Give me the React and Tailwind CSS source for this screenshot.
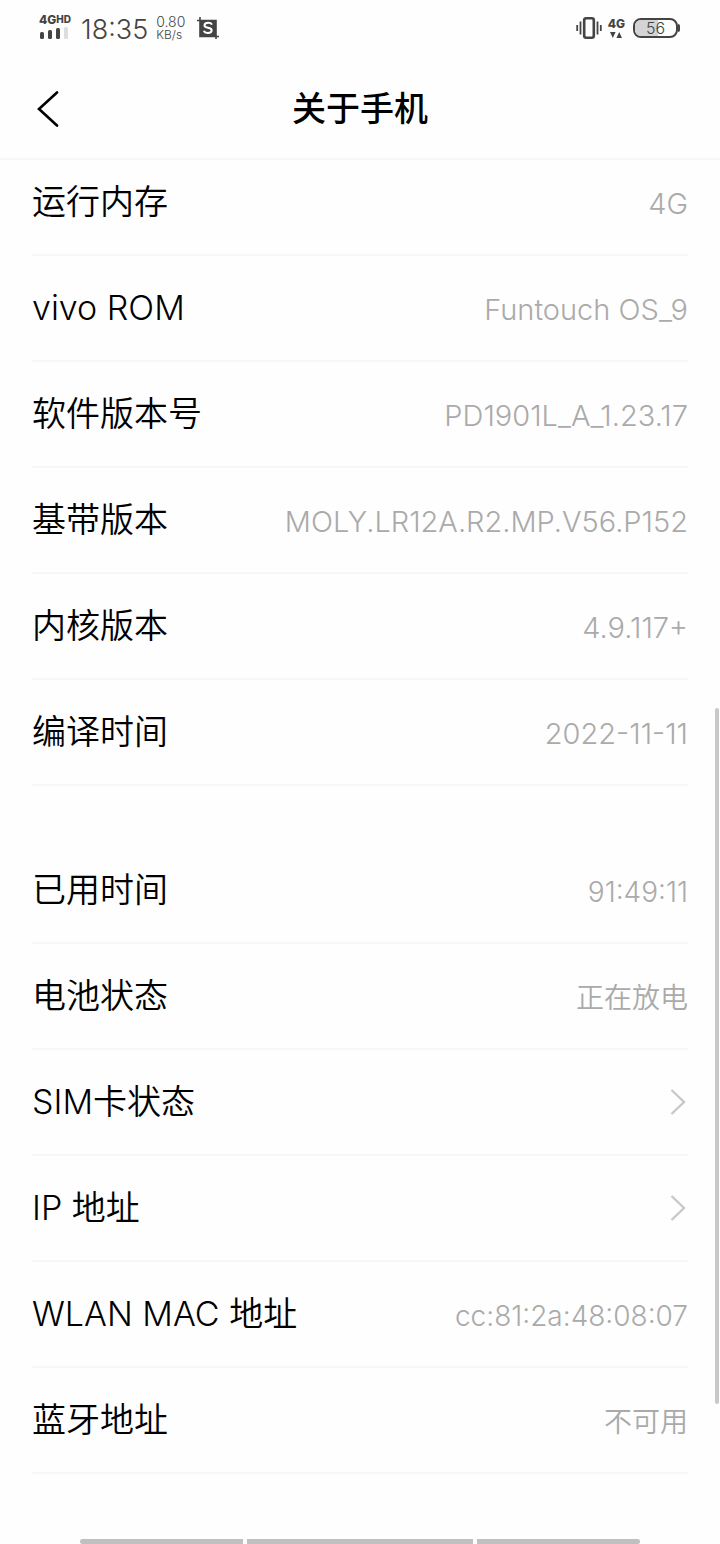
import React from 'react';

const deviceInfo = [
  { label: '运行内存', value: '4G' },
  { label: 'vivo ROM', value: 'Funtouch OS_9' },
  { label: '软件版本号', value: 'PD1901L_A_1.23.17' },
  { label: '基带版本', value: 'MOLY.LR12A.R2.MP.V56.P152' },
  { label: '内核版本', value: '4.9.117+' },
  { label: '编译时间', value: '2022-11-11' },
];

const statusInfo = [
  { label: '已用时间', value: '91:49:11' },
  { label: '电池状态', value: '正在放电' },
  { label: 'SIM卡状态', link: true },
  { label: 'IP 地址', link: true },
  { label: 'WLAN MAC 地址', value: 'cc:81:2a:48:08:07' },
  { label: '蓝牙地址', value: '不可用' },
];

const SignalBars = () => (
  <svg width="30" height="12" viewBox="0 0 30 12" fill="#444">
    <rect x="1" y="5" width="4" height="7" rx="1.5" />
    <rect x="9" y="3" width="4" height="9" rx="1.5" />
    <rect x="17" y="1" width="4" height="11" rx="1.5" />
    <rect x="25" y="0" width="4" height="12" rx="1.5" fill="#ddd" />
  </svg>
);

const ScreenshotIcon = () => (
  <svg width="22" height="22" viewBox="0 0 22 22">
    <path d="M0 3.5H19V22M3 0V19.5H22" fill="none" stroke="#444" strokeWidth="1.6" />
    <rect x="3" y="3" width="16" height="16" fill="#444" />
    <path
      d="M15 7.6C14.4 6.4 13 5.8 11.2 5.8C9 5.8 7.5 6.7 7.5 8.4C7.5 11.8 14.7 9.8 14.7 13.3C14.7 15 13.2 16 11 16C9 16 7.4 15.2 6.9 13.7"
      fill="none"
      stroke="#fff"
      strokeWidth="2"
    />
  </svg>
);

const VibrateIcon = () => (
  <svg width="26" height="24" viewBox="0 0 26 24" fill="none" stroke="#444">
    <rect x="8.2" y="2.2" width="9.6" height="19.6" rx="2" strokeWidth="2.6" />
    <path d="M4.5 5.5V18.5M21.5 5.5V18.5M1.2 9V15M24.8 9V15" strokeWidth="1.8" />
  </svg>
);

const DataArrows = () => (
  <svg width="12" height="6" viewBox="0 0 12 6" fill="#444">
    <path d="M0 0H5.6L2.8 6ZM6.4 6H12L9.2 0Z" />
  </svg>
);

const StatusBar = () => (
  <div className="h-14 pl-[39px] pr-10 flex items-center justify-between text-[#444]">
    <div className="flex items-center">
      <div className="pb-1 flex flex-col">
        <div className="flex items-start font-extrabold">
          <span className="text-[12px] leading-[14px]">4G</span>
          <span className="text-[10px] leading-3">HD</span>
        </div>
        <SignalBars />
      </div>
      <span className="ml-2.5 mt-1 text-[27px] leading-8">18:35</span>
      <div className="ml-2 flex flex-col">
        <span className="text-[14px] leading-[14px]">0.80</span>
        <span className="text-[12px] leading-3">KB/s</span>
      </div>
      <div className="ml-3">
        <ScreenshotIcon />
      </div>
    </div>
    <div className="flex items-center">
      <VibrateIcon />
      <div className="ml-1.5 flex flex-col items-center gap-0.5">
        <span className="text-[12px] leading-3 font-extrabold">4G</span>
        <DataArrows />
      </div>
      <div className="ml-2 flex items-center">
        <div className="relative w-[45px] h-5 rounded-[8px] border-2 border-[#444] overflow-hidden flex items-center justify-center">
          <div className="absolute inset-y-0 left-0 w-[56%] bg-[#d4d4d4]" />
          <span className="relative text-[16px] leading-4">56</span>
        </div>
        <div className="w-0.5 h-2 rounded-r bg-[#444]" />
      </div>
    </div>
  </div>
);

const Header = () => (
  <header className="h-[104px] px-8 pt-1 border-b-2 border-[#f7f7f7] grid grid-cols-[1fr_auto_1fr] items-center">
    <button type="button" aria-label="返回" className="w-8 h-12 flex items-center justify-center">
      <svg width="22" height="36" viewBox="0 0 22 36" fill="none" stroke="#000" strokeWidth="2.6">
        <path d="M20 1.5L2 18L20 34.5" strokeLinecap="round" />
      </svg>
    </button>
    <h1 className="text-[34px] leading-10 font-medium">关于手机</h1>
  </header>
);

const InfoRow = ({ label, value, link }) => {
  const title = <span className="text-[34px] leading-10">{label}</span>;

  return (
    <li className="border-b-2 border-[#f7f7f7]">
      {link ? (
        <button type="button" className="w-full h-[104px] flex items-center justify-between text-left">
          {title}
          <svg width="18" height="28" viewBox="0 0 18 28" fill="none" stroke="#c8c8c8" strokeWidth="2.4">
            <path d="M1.5 2L14 14L1.5 26" />
          </svg>
        </button>
      ) : (
        <div className="h-[104px] flex items-center justify-between">
          {title}
          <span className="mt-1 leading-10 text-[#aaa]">{value}</span>
        </div>
      )}
    </li>
  );
};

const InfoList = ({ items, className }) => (
  <ul className={className}>
    {items.map((item) => (
      <InfoRow key={item.label} {...item} />
    ))}
  </ul>
);

export default function App() {
  return (
    <div className="min-h-screen flex flex-col bg-[#fefefe] text-black font-[350] font-['Inter','Noto_Sans_CJK_SC',sans-serif]">
      <StatusBar />
      <Header />

      <main className="relative flex-1 overflow-hidden px-8">
        {/* List is scrolled slightly past its first row */}
        <div className="-mt-2.5 flex flex-col gap-[52px]">
          <InfoList items={deviceInfo} className="text-[29px]" />
          <InfoList items={statusInfo} className="text-[28px]" />
        </div>
        <div className="absolute right-px top-[548px] w-1 h-[696px] rounded-full bg-[#c8c8c8]" />
      </main>

      {/* Gesture bar */}
      <nav className="px-20 flex gap-1">
        <div className="flex-[163] h-[5px] rounded-l-full bg-[#c0c0c0]" />
        <div className="flex-[226] h-[5px] bg-[#c0c0c0]" />
        <div className="flex-[163] h-[5px] rounded-r-full bg-[#c0c0c0]" />
      </nav>
    </div>
  );
}
